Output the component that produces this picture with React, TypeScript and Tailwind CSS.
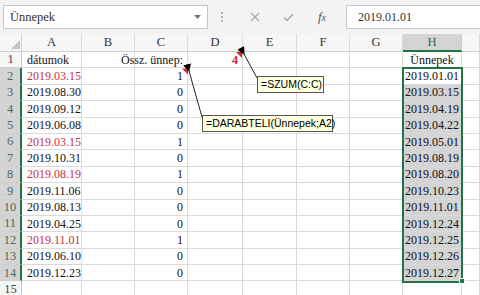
import React from 'react';

const serif = '"Liberation Serif", "Times New Roman", serif';
const sans = '"Liberation Sans", Arial, sans-serif';

const colLetters = ['A', 'B', 'C', 'D', 'E', 'F', 'G', 'H', ''];

const datesA: { v: string; red?: boolean }[] = [
  { v: '2019.03.15', red: true },
  { v: '2019.08.30' },
  { v: '2019.09.12' },
  { v: '2019.06.08' },
  { v: '2019.03.15', red: true },
  { v: '2019.10.31' },
  { v: '2019.08.19', red: true },
  { v: '2019.11.06' },
  { v: '2019.08.13' },
  { v: '2019.04.25' },
  { v: '2019.11.01', red: true },
  { v: '2019.06.10' },
  { v: '2019.12.23' },
];

const countsC = [1, 0, 0, 0, 1, 0, 1, 0, 0, 0, 1, 0, 0];

const holidays = [
  '2019.01.01',
  '2019.03.15',
  '2019.04.19',
  '2019.04.22',
  '2019.05.01',
  '2019.08.19',
  '2019.08.20',
  '2019.10.23',
  '2019.11.01',
  '2019.12.24',
  '2019.12.25',
  '2019.12.26',
  '2019.12.27',
];

function FormulaBar() {
  return (
    <div className="flex h-[34px] items-center bg-[#f3f3f3]">
      <div className="ml-[3px] flex h-[24px] w-[205px] items-center justify-between border border-[#c6c6c6] bg-white pl-[6px] pr-[6px]">
        <span className="text-[12.5px] text-[#333]" style={{ fontFamily: serif }}>
          Ünnepek
        </span>
        <svg width="7" height="4" viewBox="0 0 7 4">
          <path d="M0 0 L7 0 L3.5 4 Z" fill="#777" />
        </svg>
      </div>
      <div className="flex w-[28px] flex-col items-center gap-[2px]">
        <span className="h-[2px] w-[2px] bg-[#b5b5b5]" />
        <span className="h-[2px] w-[2px] bg-[#b5b5b5]" />
        <span className="h-[2px] w-[2px] bg-[#b5b5b5]" />
      </div>
      <div className="ml-[2px] flex w-[34px] justify-center">
        <svg width="10" height="10" viewBox="0 0 10 10">
          <path d="M1 1 L9 9 M9 1 L1 9" stroke="#a8a8a8" strokeWidth="1.2" />
        </svg>
      </div>
      <div className="flex w-[33px] justify-center">
        <svg width="11" height="9" viewBox="0 0 11 9">
          <path d="M1 4.5 L4 7.5 L10 1" stroke="#a8a8a8" strokeWidth="1.3" fill="none" />
        </svg>
      </div>
      <div className="flex w-[34px] justify-center text-[13px] text-[#555]" style={{ fontFamily: serif }}>
        <span className="italic">f</span>
        <span className="mt-[3px] text-[10px] italic">x</span>
      </div>
      <div className="-mr-[4px] ml-[7px] flex h-[24px] flex-1 items-center border border-[#c6c6c6] bg-white pl-[11px]">
        <span className="text-[12px] text-[#333]" style={{ fontFamily: serif }}>
          2019.01.01
        </span>
      </div>
    </div>
  );
}

function Cell({
  children,
  align = 'left',
  className = '',
}: {
  children?: React.ReactNode;
  align?: 'left' | 'right' | 'center';
  className?: string;
}) {
  const justify = align === 'right' ? 'justify-end' : align === 'center' ? 'justify-center' : 'justify-start';
  return (
    <div
      className={`flex items-center whitespace-nowrap border-b border-r border-[#dadada] px-[3px] text-[12px] leading-none text-[#111] ${justify} ${className}`}
    >
      {children}
    </div>
  );
}

function Sheet() {
  const rows = [];
  for (let r = 1; r <= 15; r++) {
    const selectedRow = r >= 2 && r <= 14;
    const i = r - 2;
    rows.push(
      <div
        key={`rh${r}`}
        className={`flex items-center justify-center border-b border-[#d0d0d0] text-[12.5px] leading-none ${
          selectedRow ? 'border-r-2 border-r-[#217346] bg-[#d4d4d4] text-[#4f6a5b]' : 'border-r border-r-[#c8c8c8] bg-[#f6f6f6] text-[#444]'
        }`}
      >
        {r}
      </div>,
    );
    // A
    rows.push(
      <Cell key={`a${r}`} className="pl-[5px]">
        {r === 1 ? 'dátumok' : selectedRow ? (
          <span className={datesA[i].red ? 'text-[#c8323e]' : ''}>{datesA[i].v}</span>
        ) : null}
      </Cell>,
    );
    // B
    rows.push(<Cell key={`b${r}`} />);
    // C
    rows.push(
      <Cell key={`c${r}`} align="right" className="overflow-visible pr-[4px]">
        {r === 1 ? <span className="relative">Össz. ünnep:</span> : selectedRow ? countsC[i] : null}
      </Cell>,
    );
    // D
    rows.push(
      <Cell key={`d${r}`} align="right" className="pr-[4px]">
        {r === 1 ? <span className="font-bold text-[#d0202e]">4</span> : null}
      </Cell>,
    );
    rows.push(<Cell key={`e${r}`} />);
    rows.push(<Cell key={`f${r}`} />);
    rows.push(<Cell key={`g${r}`} />);
    // H
    rows.push(
      <Cell
        key={`h${r}`}
        align="center"
        className={`${r === 1 ? 'text-[11px]' : ''} ${r >= 3 && r <= 14 ? 'border-[#bdbdbd] bg-[#d4d4d4]' : ''}`}
      >
        {r === 1 ? 'Ünnepek' : selectedRow ? holidays[i] : null}
      </Cell>,
    );
    rows.push(<Cell key={`i${r}`} />);
  }

  return (
    <div className="relative" style={{ fontFamily: serif }}>
      <div className="grid grid-cols-[22px_60px_53px_53px_55px_54px_53px_53px_59px_1fr] grid-rows-[18px_repeat(15,16.4px)]">
        <div className="flex items-end justify-end border-b border-r border-[#d0d0d0] bg-[#f6f6f6] pb-[2px] pr-[1px]">
          <svg width="9" height="9" viewBox="0 0 9 9">
            <path d="M9 0 L9 9 L0 9 Z" fill="#c4c4c4" />
          </svg>
        </div>
        {colLetters.map((c) =>
          c === 'H' ? (
            <div
              key={c}
              className="flex items-center justify-center border-b-2 border-r border-b-[#217346] border-r-[#c8c8c8] bg-[#d4d4d4] text-[12.5px] leading-none text-[#217346]"
            >
              {c}
            </div>
          ) : (
            <div
              key={c || 'blank'}
              className="flex items-center justify-center border-b border-r border-b-[#d0d0d0] border-r-[#dcdcdc] bg-[#f6f6f6] text-[12.5px] leading-none text-[#333]"
            >
              {c}
            </div>
          ),
        )}
        {rows}
      </div>

      {/* selection H2:H14 */}
      <div className="pointer-events-none absolute left-[402px] top-[33.4px] h-[215.2px] w-[61px] border-2 border-[#217346]" />
      <div className="pointer-events-none absolute left-[459px] top-[244px] h-[6px] w-[6px] border border-white bg-[#217346]" />

      {/* comment arrows */}
      <svg className="pointer-events-none absolute left-0 top-0" width="480" height="261">
        <defs>
          <marker id="ah" markerWidth="8" markerHeight="8" refX="1" refY="4" orient="auto-start-reverse" markerUnits="userSpaceOnUse">
            <path d="M0 4 L8 0 L8 8 Z" fill="#000" />
          </marker>
        </defs>
        <polygon points="236,18 242,18 242,24" fill="#e02020" />
        <polygon points="182,34.4 188,34.4 188,40.4" fill="#e02020" />
        <line x1="244" y1="20" x2="257" y2="44" stroke="#222" strokeWidth="1" markerStart="url(#ah)" />
        <line x1="189" y1="37" x2="202" y2="83" stroke="#222" strokeWidth="1" markerStart="url(#ah)" />
      </svg>

      <div
        className="absolute left-[257px] top-[42px] flex h-[17px] w-[67px] items-center border border-[#555] bg-[#ffffe1] pl-[3px] text-[10.5px] leading-none text-black"
        style={{ fontFamily: sans }}
      >
        =SZUM(C:C)
      </div>
      <div
        className="absolute left-[202px] top-[81px] flex h-[17px] w-[131px] items-center border border-[#555] bg-[#ffffe1] pl-[3px] text-[10.5px] leading-none text-black"
        style={{ fontFamily: sans }}
      >
        =DARABTELI(Ünnepek;A2)
      </div>
    </div>
  );
}

export default function App() {
  return (
    <div className="h-[295px] w-[480px] overflow-hidden bg-white">
      <FormulaBar />
      <Sheet />
    </div>
  );
}
